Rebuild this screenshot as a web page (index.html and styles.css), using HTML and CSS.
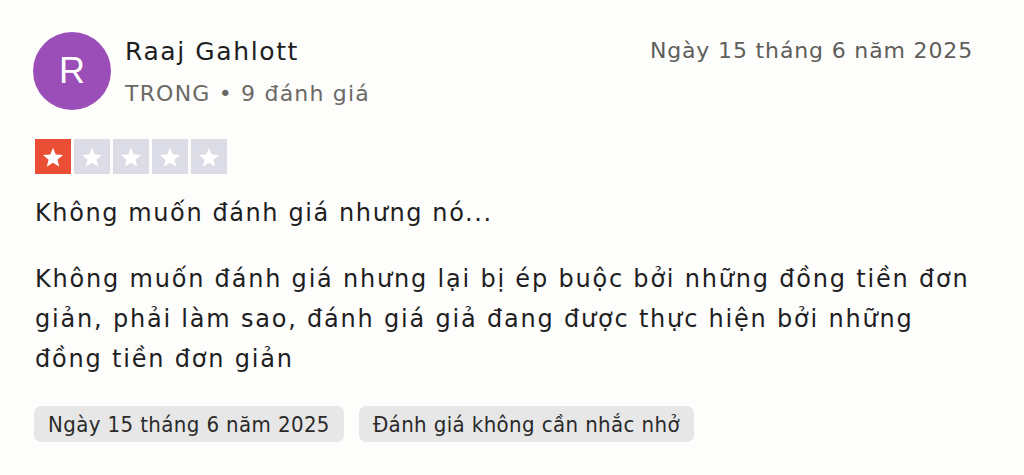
FILE: index.html
```html
<!DOCTYPE html>
<html lang="vi">
<head>
<meta charset="utf-8">
<link rel="stylesheet" href="styles.css">
</head>
<body>
<article class="review">
  <header class="head">
    <div class="avatar">R</div>
    <div class="who">
      <div class="name">Raaj Gahlott</div>
      <div class="meta">TRONG • 9 đánh giá</div>
    </div>
    <div class="date">Ngày 15 tháng 6 năm 2025</div>
  </header>
  <div class="stars">
    <span class="star on"><svg viewBox="0 0 24 24"><path d="M12 3.5l2.5 6.3 6.8.4-5.2 4.3 1.7 6.6L12 17.4l-5.8 3.7 1.7-6.6-5.2-4.3 6.8-.4z"/></svg></span>
    <span class="star"><svg viewBox="0 0 24 24"><path d="M12 3.5l2.5 6.3 6.8.4-5.2 4.3 1.7 6.6L12 17.4l-5.8 3.7 1.7-6.6-5.2-4.3 6.8-.4z"/></svg></span>
    <span class="star"><svg viewBox="0 0 24 24"><path d="M12 3.5l2.5 6.3 6.8.4-5.2 4.3 1.7 6.6L12 17.4l-5.8 3.7 1.7-6.6-5.2-4.3 6.8-.4z"/></svg></span>
    <span class="star"><svg viewBox="0 0 24 24"><path d="M12 3.5l2.5 6.3 6.8.4-5.2 4.3 1.7 6.6L12 17.4l-5.8 3.7 1.7-6.6-5.2-4.3 6.8-.4z"/></svg></span>
    <span class="star"><svg viewBox="0 0 24 24"><path d="M12 3.5l2.5 6.3 6.8.4-5.2 4.3 1.7 6.6L12 17.4l-5.8 3.7 1.7-6.6-5.2-4.3 6.8-.4z"/></svg></span>
  </div>
  <h2 class="title">Không muốn đánh giá nhưng nó...</h2>
  <p class="body">Không muốn đánh giá nhưng lại bị ép buộc bởi những đồng tiền đơn giản, phải làm sao, đánh giá giả đang được thực hiện bởi những đồng tiền đơn giản</p>
  <div class="tags">
    <span class="tag">Ngày 15 tháng 6 năm 2025</span>
    <span class="tag">Đánh giá không cần nhắc nhở</span>
  </div>
</article>
</body>
</html>
```
FILE: styles.css
```css
html, body {
  margin: 0;
  padding: 0;
  background: #fdfdfc;
}
body {
  font-family: "DejaVu Sans", "Noto Sans", sans-serif;
  color: #1e1e1e;
}
.review {
  width: 940px;
  padding: 32px 50px 0 33px;
}
.head {
  display: flex;
  align-items: flex-start;
}
.avatar {
  width: 78px;
  height: 78px;
  border-radius: 50%;
  background: #9b4db8;
  color: #fff;
  font-family: "Liberation Sans", sans-serif;
  font-size: 36px;
  display: flex;
  align-items: center;
  justify-content: center;
  flex: none;
}
.who {
  margin-left: 14px;
  flex: 1;
  padding-top: 5px;
}
.name {
  font-size: 25px;
  line-height: 30px;
  letter-spacing: 1.6px;
  color: #1e1e1e;
}
.meta {
  margin-top: 13px;
  font-size: 22px;
  line-height: 28px;
  letter-spacing: 1.2px;
  color: #6a6964;
}
.date {
  font-size: 22px;
  line-height: 28px;
  letter-spacing: 0.85px;
  color: #5f5e5a;
  padding-top: 5px;
}
.stars {
  display: flex;
  gap: 3px;
  margin-top: 29px;
  padding-left: 2px;
}
.star {
  width: 36px;
  height: 35px;
  background: #dcdce6;
  display: flex;
  align-items: center;
  justify-content: center;
}
.star.on {
  background: #ea4f35;
}
.star svg {
  width: 26px;
  height: 26px;
  fill: #fff;
}
.title {
  margin: 22px 0 0;
  padding-left: 2px;
  font-size: 24px;
  line-height: 34px;
  font-weight: 400;
  letter-spacing: 1.6px;
  color: #1e1e1e;
}
.body {
  margin: 29px 0 0;
  padding-left: 2px;
  font-size: 24px;
  line-height: 40px;
  letter-spacing: 1.8px;
  color: #1e1e1e;
}
.tags {
  display: flex;
  gap: 15px;
  margin-top: 27px;
  padding-left: 1px;
}
.tag {
  background: #e7e7e7;
  border-radius: 7px;
  padding: 0 14px;
  height: 36px;
  display: flex;
  align-items: center;
  font-family: "DejaVu Sans Condensed", "DejaVu Sans", sans-serif;
  font-size: 22px;
  letter-spacing: 0.4px;
  color: #2a2a2a;
}
```
